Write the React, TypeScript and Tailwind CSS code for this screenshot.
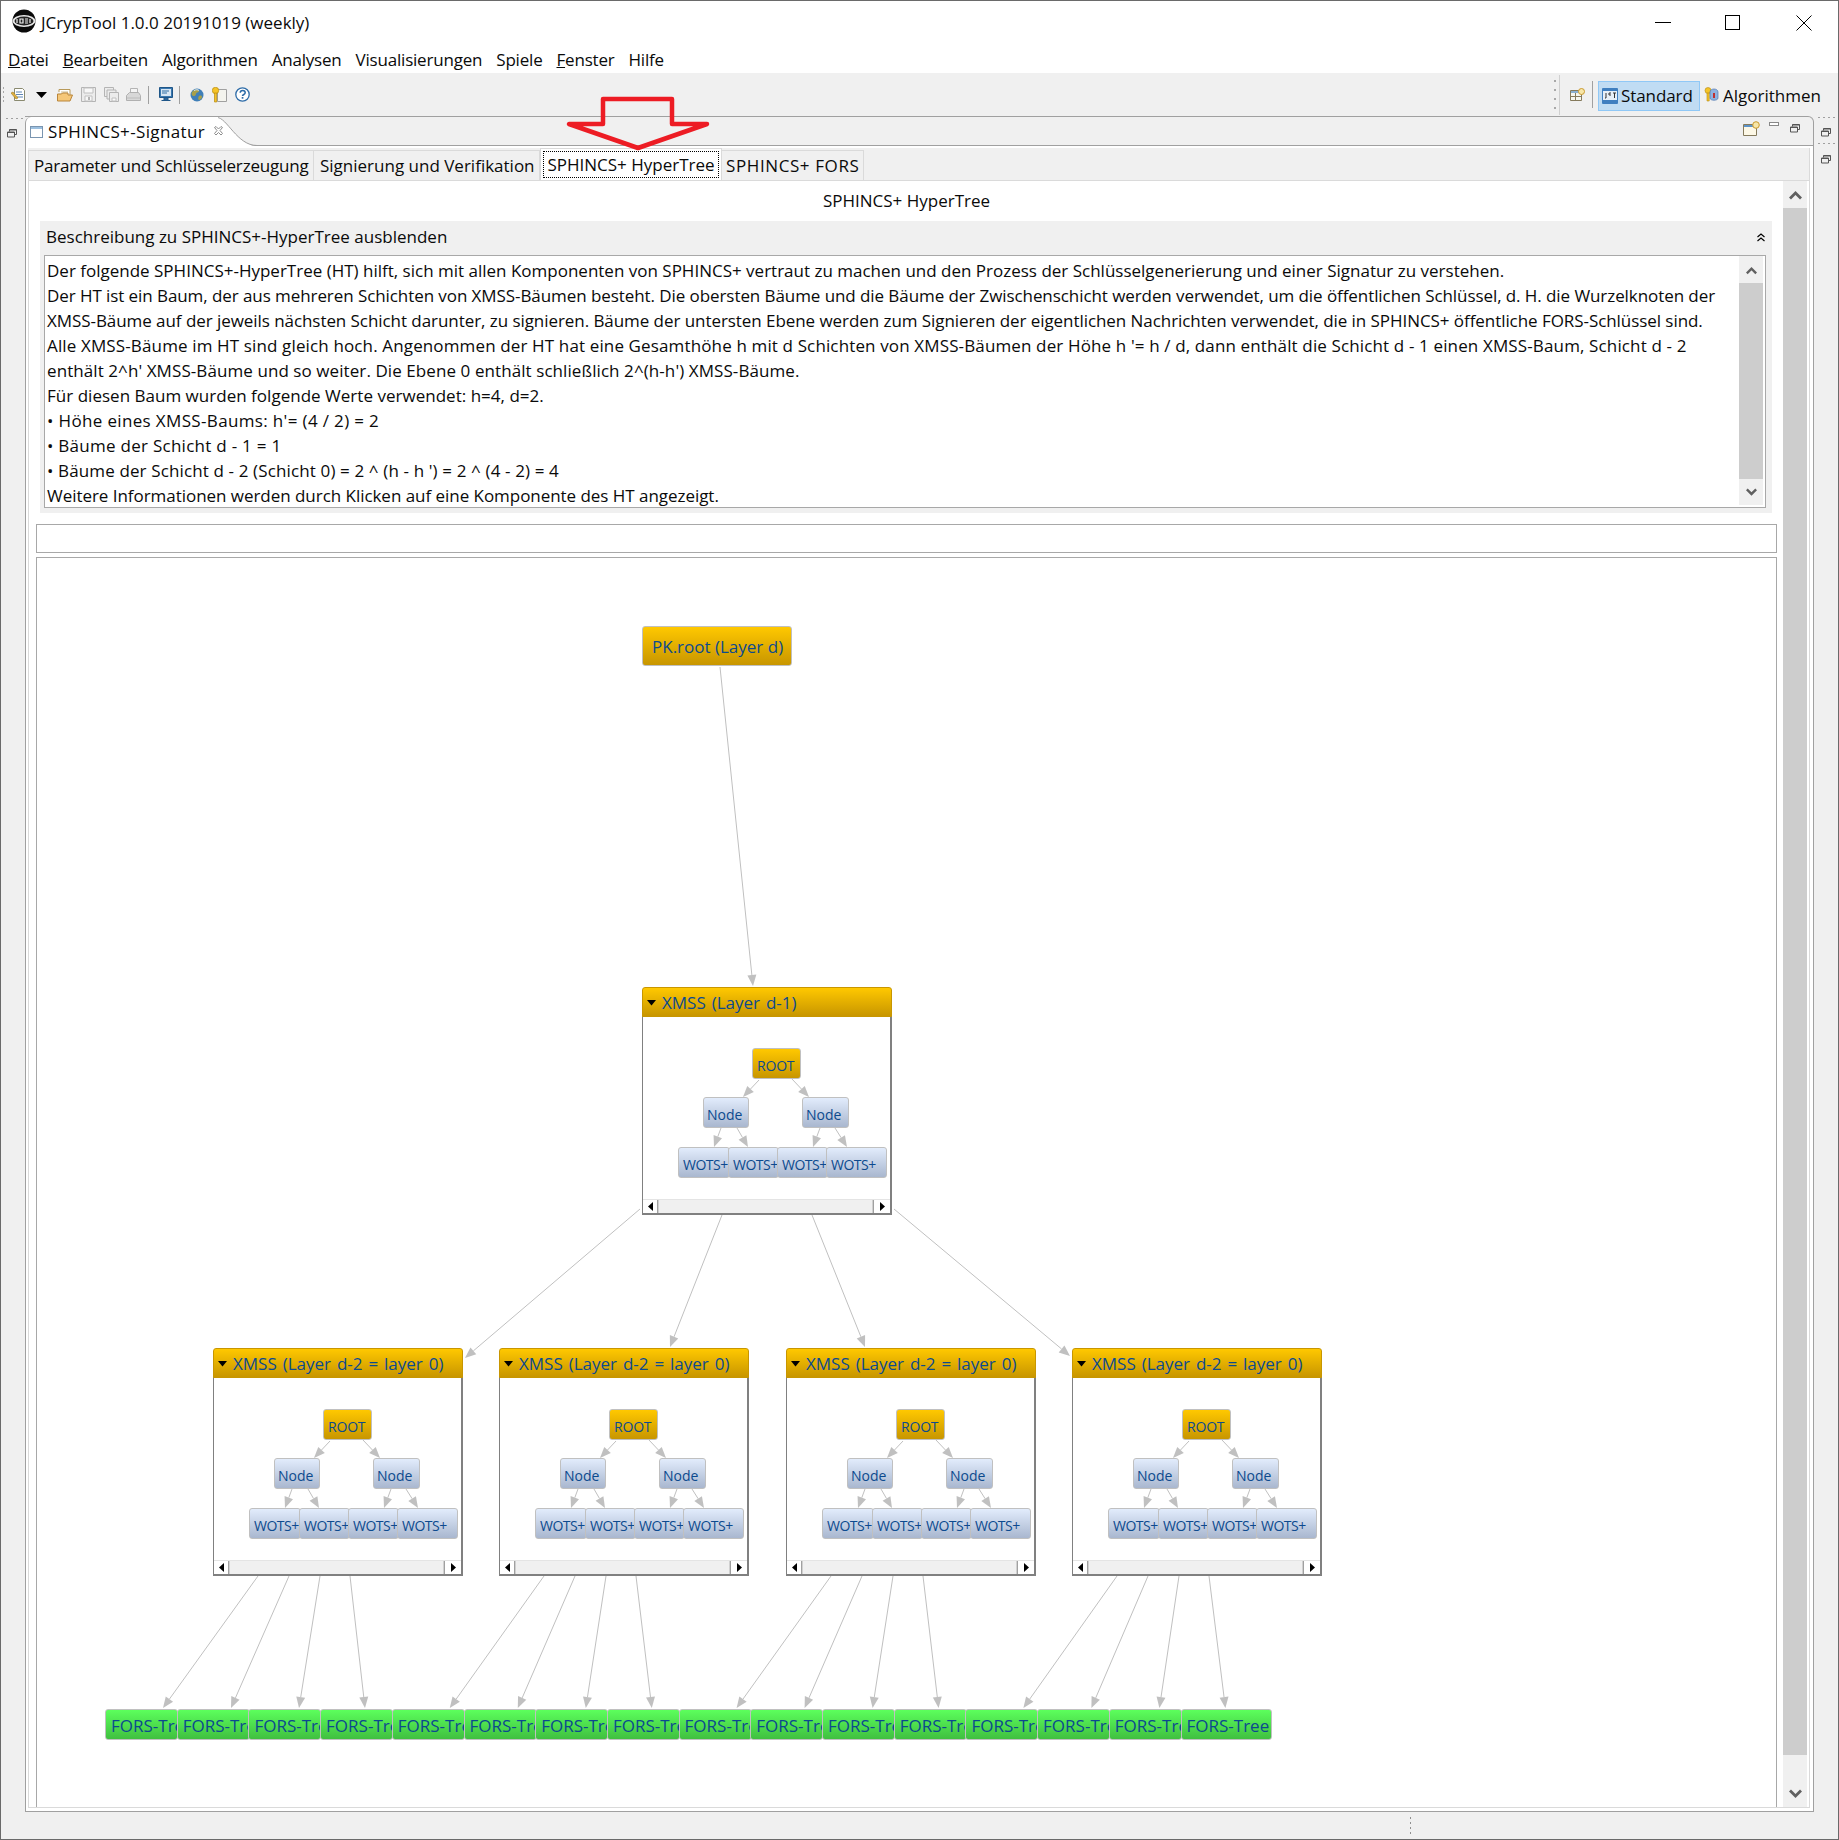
import React from "react";

const CX = 37;
const CY = 558;

type Pt = [number, number, number, number];

function Arrow({ l }: { l: Pt }) {
  const [x1, y1, x2, y2] = l;
  const a = Math.atan2(y2 - y1, x2 - x1);
  const s = 11;
  const w = 4.5;
  const bx = x2 - Math.cos(a) * s;
  const by = y2 - Math.sin(a) * s;
  const p = `${x2},${y2} ${bx - Math.sin(a) * w},${by + Math.cos(a) * w} ${bx + Math.sin(a) * w},${by - Math.cos(a) * w}`;
  return (
    <g>
      <line x1={x1} y1={y1} x2={bx} y2={by} stroke="#c0c0c0" strokeWidth="1" />
      <polygon points={p} fill="#c0c0c0" />
    </g>
  );
}

const yellow = "border border-[#c0c0c0] bg-gradient-to-b from-[#ffc800] to-[#c89600]";
const blue = "border border-[#c0c0c0] bg-gradient-to-b from-[#e2ecfc] to-[#a9b7cf]";
const green = "border border-[#c0c0c0] bg-gradient-to-b from-[#5cff5c] to-[#40c040]";

function GNode({ x, y, w, h, kind, text, pad, size, track = 0 }: { x: number; y: number; w: number; h: number; kind: string; text: string; pad: number; size: number; track?: number }) {
  return (
    <div
      className={`absolute overflow-hidden whitespace-nowrap rounded-[3px] text-[#0c4a8e] ${kind}`}
      style={{ left: x, top: y, width: w, height: h, paddingLeft: pad, paddingTop: size < 15 ? 1 : 0, lineHeight: `${h}px`, fontSize: size, letterSpacing: track }}
    >
      {text}
    </div>
  );
}

const innerEdges: Pt[] = [
  [117, 93, 101, 110],
  [150, 92, 167, 110],
  [79, 141, 72, 160],
  [95, 141, 106, 160],
  [178, 141, 171, 160],
  [193, 141, 205, 160],
];

function Xmss({ x, y, title }: { x: number; y: number; title: string }) {
  return (
    <div className="absolute h-[228px] w-[250px]" style={{ left: x, top: y }}>
      <div className="absolute inset-x-0 bottom-0 top-[28px] border border-b-2 border-r-2 border-[#808080] bg-white" />
      <div className={`absolute inset-x-0 top-0 flex h-[30px] items-center rounded-t-[3px] border-[#c89600] ${yellow} pt-[1px] text-[17px] text-[#0c4a8e] [word-spacing:1.5px]`}>
        <svg width="9" height="6" className="ml-[4px] mr-[6px]" viewBox="0 0 9 6"><path d="M0 0h9L4.5 5.5z" fill="#000" /></svg>
        <span className="whitespace-nowrap">{title}</span>
      </div>
      <svg className="absolute inset-0" width="250" height="228">
        {innerEdges.map((l, i) => <Arrow key={i} l={l} />)}
      </svg>
      <GNode x={110} y={61} w={49} h={31} kind={yellow} text="ROOT" pad={4} size={14} track={-0.2} />
      <GNode x={61} y={110} w={46} h={31} kind={blue} text="Node" pad={3} size={14} />
      <GNode x={160} y={110} w={47} h={31} kind={blue} text="Node" pad={3} size={14} />
      <GNode x={36} y={160} w={52} h={31} kind={blue} text="WOTS+" pad={4} size={14} track={-0.5} />
      <GNode x={86} y={160} w={51} h={31} kind={blue} text="WOTS+" pad={4} size={14} track={-0.5} />
      <GNode x={135} y={160} w={51} h={31} kind={blue} text="WOTS+" pad={4} size={14} track={-0.5} />
      <GNode x={184} y={160} w={61} h={31} kind={blue} text="WOTS+" pad={4} size={14} track={-0.5} />
      <div className="absolute bottom-[2px] left-[1px] right-[2px] flex h-[14px] border-t border-[#e4e4e4] bg-white">
        <div className="flex w-[15px] items-center justify-center border-r border-[#a0a0a0]">
          <svg width="5" height="9" viewBox="0 0 5 9"><path d="M5 0v9L0 4.5z" fill="#000" /></svg>
        </div>
        <div className="flex-1 border-x border-[#d0d0d0] bg-[#f0f0f0]" />
        <div className="flex w-[17px] items-center justify-center border-l border-[#a0a0a0]">
          <svg width="5" height="9" viewBox="0 0 5 9"><path d="M0 0v9L5 4.5z" fill="#000" /></svg>
        </div>
      </div>
    </div>
  );
}

const frames = [213, 499, 786, 1072];
const forsX = Array.from({ length: 16 }, (_, i) => 105 + i * 71.7);

function Graph() {
  const edges: Pt[] = [
    [720, 667, 753, 986],
    [640, 1209, 465, 1358],
    [722, 1215, 670, 1347],
    [812, 1215, 865, 1347],
    [894, 1209, 1070, 1356],
  ];
  frames.forEach((f, i) => {
    const d = f - 213;
    const t = i * 286.8;
    edges.push([258 + d, 1576, 163 + t, 1708]);
    edges.push([289 + d, 1576, 231 + t, 1708]);
    edges.push([320 + d, 1576, 299 + t, 1708]);
    edges.push([350 + d, 1576, 365 + t, 1708]);
  });
  return (
    <div className="relative min-h-0 flex-1 overflow-hidden border-x border-t border-[#a8a8a8] bg-white">
      <svg className="absolute inset-0" width="1740" height="1250">
        {edges.map((e, i) => (
          <Arrow key={i} l={[e[0] - CX, e[1] - CY, e[2] - CX, e[3] - CY]} />
        ))}
      </svg>
      <GNode x={642 - CX} y={626 - CY} w={150} h={40} kind={yellow} text="PK.root (Layer d)" pad={9} size={17} />
      <Xmss x={642 - CX} y={987 - CY} title="XMSS (Layer d-1)" />
      {frames.map((f) => (
        <Xmss key={f} x={f - CX} y={1348 - CY} title="XMSS (Layer d-2 = layer 0)" />
      ))}
      {forsX.map((x, i) => (
        <GNode
          key={i}
          x={x - CX}
          y={1709 - CY}
          w={i === 15 ? 1272 - x : 73}
          h={31}
          kind={green}
          text="FORS-Tree"
          pad={5}
          size={17}
        />
      ))}
    </div>
  );
}

function Chevron({ up, size = 13, color = "#606060" }: { up?: boolean; size?: number; color?: string }) {
  return (
    <svg width={size} height={size * 0.7} viewBox="0 0 13 9">
      <path d={up ? "M1 7.5 6.5 2 12 7.5" : "M1 1.5 6.5 7 12 1.5"} fill="none" stroke={color} strokeWidth="2.8" />
    </svg>
  );
}

function Restore({ className = "" }: { className?: string }) {
  return (
    <svg width="10" height="9" viewBox="0 0 10 9" className={className}>
      <path d="M2.5 2.5V.5h7v5h-2M.5 3h7v5h-7z" fill="none" stroke="#555" />
      <path d="M.5 3.5h7M2.5 1h7" stroke="#555" />
    </svg>
  );
}

function Dots({ className = "" }: { className?: string }) {
  return (
    <div className={`flex gap-[3px] ${className}`}>
      {[0, 1, 2, 3].map((i) => <div key={i} className="h-px w-[2px] bg-[#a0a0a0]" />)}
    </div>
  );
}

function Logo() {
  return (
    <svg width="24" height="24" viewBox="0 0 24 24">
      <circle cx="12" cy="12" r="11.5" fill="#0a0a0a" />
      <ellipse cx="12" cy="12" rx="11.5" ry="6" fill="#e8e8e8" />
      <ellipse cx="12" cy="12" rx="9.5" ry="4.4" fill="#222" />
      <path d="M5 10v4M8 10h3v4H8zM13 10h3M13 12h3M16 14h-3M18 10v4" stroke="#f0f0f0" strokeWidth="1.2" fill="none" />
    </svg>
  );
}

function TB({ children, w, ml }: { children: React.ReactNode; w: number; ml: number }) {
  return <div className="flex shrink-0 items-center justify-center" style={{ width: w, marginLeft: ml }}>{children}</div>;
}

function NewIcon() {
  return (
    <svg width="15" height="15" viewBox="0 0 15 15">
      <path d="M3.5 1.5h8l2 2v10h-10z" fill="#fff" stroke="#8a8a70" />
      <path d="M5 5h6M5 7.5h7M6 10h6" stroke="#5f86b5" />
      <path d="M0 6l5 6 2-1-5-6z" fill="#e0b040" stroke="#a07a20" strokeWidth=".6" />
    </svg>
  );
}

function FolderIcon() {
  return (
    <svg width="16" height="14" viewBox="0 0 16 14">
      <path d="M2 4V1.5h11V10" fill="#fff" stroke="#b89a5a" />
      <path d="M4 4h7M4 6h7" stroke="#c9b98e" />
      <path d="M.5 13V6h4l1-1H11v2h4.5L13 13z" fill="#f5c779" stroke="#b9853a" />
    </svg>
  );
}

function SaveIcon() {
  return (
    <svg width="15" height="15" viewBox="0 0 15 15">
      <path d="M.5.5h14v14H.5z" fill="#ececec" stroke="#b4b4b4" />
      <path d="M3 1h9v5H3zM4 9h7v5H4z" fill="#f8f8f8" stroke="#c0c0c0" />
      <path d="M7 10h2v3H7z" fill="#b4b4b4" />
    </svg>
  );
}

function SaveAllIcon() {
  return (
    <svg width="15" height="15" viewBox="0 0 15 15">
      <path d="M.5.5h9v9h-9z" fill="#ececec" stroke="#b4b4b4" />
      <path d="M3 3h9v9H3z" fill="#ececec" stroke="#b4b4b4" />
      <path d="M5.500 5.500h9v9h-9z" fill="#ececec" stroke="#b4b4b4" />
      <path d="M8 11h4v3H8z" fill="#fafafa" stroke="#c0c0c0" />
    </svg>
  );
}

function PrintIcon() {
  return (
    <svg width="15" height="15" viewBox="0 0 15 15">
      <path d="M4.500 1.500h7v6h-7z" fill="#f5f5f5" stroke="#b4b4b4" />
      <path d="M.5 8.500l3-3h9l2 3v5H.5z" fill="#d8d8d8" stroke="#b0b0b0" />
      <path d="M1 11h13" stroke="#bcbcbc" />
    </svg>
  );
}

function MonitorIcon() {
  return (
    <svg width="14" height="15" viewBox="0 0 14 15">
      <path d="M.5.5h13v10H.5z" fill="#3a78b0" stroke="#1f5688" />
      <path d="M2 2h10v7H2z" fill="#d7e6f3" />
      <path d="M3 4h7M3 6h5" stroke="#2f6ea5" />
      <path d="M5 11h4v2H5zM2.500 13.500h9" fill="#3a78b0" stroke="#1f5688" />
    </svg>
  );
}

function GlobeIcon() {
  return (
    <svg width="14" height="14" viewBox="0 0 14 14">
      <circle cx="7" cy="7" r="6.5" fill="#3f7fb8" />
      <path d="M3 3c2-2 5-2 6 0 0 2-3 1-3 3S3 9 2 7s0-3 1-4zM9 8c2-1 3 0 3 1s-2 3-3 3-1-3 0-4z" fill="#a8a04a" />
      <path d="M4 2.500c2-1 4-1 5 0" stroke="#dfeaf5" fill="none" />
    </svg>
  );
}

function KeyBookIcon() {
  return (
    <svg width="15" height="16" viewBox="0 0 15 16">
      <path d="M5.500 2.500h9v12h-9z" fill="#f4f4ee" stroke="#a0a0a0" />
      <circle cx="3.500" cy="3.500" r="3.200" fill="#f5c428" stroke="#b78a10" strokeWidth=".7" />
      <path d="M2.500 6h2.200v9H2.500z" fill="#f5c428" stroke="#b78a10" strokeWidth=".7" />
    </svg>
  );
}

function HelpIcon() {
  return (
    <svg width="15" height="15" viewBox="0 0 15 15">
      <circle cx="7.500" cy="7.500" r="6.700" fill="#fff" stroke="#2e6ca8" strokeWidth="1.300" />
      <path d="M5.200 5.800c0-3 5-3 5 0 0 1.700-2.700 1.700-2.700 3.300" fill="none" stroke="#2e6ca8" strokeWidth="1.500" />
      <rect x="6.700" y="10" width="1.700" height="1.700" fill="#2e6ca8" />
    </svg>
  );
}

const lines: [string, number][] = [
  ["Der folgende SPHINCS+-HyperTree (HT) hilft, sich mit allen Komponenten von SPHINCS+ vertraut zu machen und den Prozess der Schlüsselgenerierung und einer Signatur zu verstehen.", 0],
  ["Der HT ist ein Baum, der aus mehreren Schichten von XMSS-Bäumen besteht. Die obersten Bäume und die Bäume der Zwischenschicht werden verwendet, um die öffentlichen Schlüssel, d. H. die Wurzelknoten der", -0.075],
  ["XMSS-Bäume auf der jeweils nächsten Schicht darunter, zu signieren. Bäume der untersten Ebene werden zum Signieren der eigentlichen Nachrichten verwendet, die in SPHINCS+ öffentliche FORS-Schlüssel sind.", -0.06],
  ["Alle XMSS-Bäume im HT sind gleich hoch. Angenommen der HT hat eine Gesamthöhe h mit d Schichten von XMSS-Bäumen der Höhe h '= h / d, dann enthält die Schicht d - 1 einen XMSS-Baum, Schicht d - 2", 0.135],
  ["enthält 2^h' XMSS-Bäume und so weiter. Die Ebene 0 enthält schließlich 2^(h-h') XMSS-Bäume.", 0.08],
  ["Für diesen Baum wurden folgende Werte verwendet: h=4, d=2.", 0.02],
  ["• Höhe eines XMSS-Baums: h'= (4 / 2) = 2", 0.35],
  ["• Bäume der Schicht d - 1 = 1", 0.27],
  ["• Bäume der Schicht d - 2 (Schicht 0) = 2 ^ (h - h ') = 2 ^ (4 - 2) = 4", 0.13],
  ["Weitere Informationen werden durch Klicken auf eine Komponente des HT angezeigt.", -0.04],
];

const menus: [string, string][] = [
  ["D", "atei"],
  ["B", "earbeiten"],
  ["", "Algorithmen"],
  ["", "Analysen"],
  ["", "Visualisierungen"],
  ["", "Spiele"],
  ["F", "enster"],
  ["", "Hilfe"],
];

export default function App() {
  return (
    <div className="relative flex h-[1840px] w-[1839px] flex-col overflow-hidden border border-[#6a6a6a] bg-[#f0f0f0] font-['Open_Sans',sans-serif] text-[17px] text-[#0a0a0a]">
      {/* Title bar */}
      <div className="flex h-[39px] shrink-0 items-center bg-white pl-[11px]">
        <Logo />
        <span className="ml-[5px] mt-[4px]">JCrypTool 1.0.0 20191019 (weekly)</span>
        <div className="ml-auto mt-[4px] flex items-center">
          <svg width="16" height="2" className="mr-[54px]"><rect width="16" height="1" fill="#000" /></svg>
          <svg width="15" height="15" className="mr-[56px]"><rect x=".5" y=".5" width="14" height="14" fill="none" stroke="#000" /></svg>
          <svg width="16" height="16" className="mr-[26px]"><path d="M.5.5l15 15M15.500.5l-15 15" stroke="#000" /></svg>
        </div>
      </div>
      {/* Menu */}
      <div className="flex h-[33px] shrink-0 items-center gap-[14px] bg-white pl-[7px] pt-[6px] tracking-[-0.2px]">
        {menus.map(([u, r]) => (
          <span key={u + r} className="whitespace-nowrap">
            {u && <span className="underline">{u}</span>}
            {r}
          </span>
        ))}
      </div>
      {/* Toolbar */}
      <div className="flex h-[43px] shrink-0 items-center">
        <div className="ml-[2px] flex h-[16px] w-[2px] flex-col justify-between">
          {[0, 1, 2, 3].map((i) => <div key={i} className="h-[2px] w-px bg-[#a8a8a8]" />)}
        </div>
        <TB w={15} ml={6}><NewIcon /></TB>
        <TB w={11} ml={10}><svg width="11" height="6" viewBox="0 0 11 6"><path d="M0 0h11L5.500 6z" fill="#000" /></svg></TB>
        <TB w={16} ml={10}><FolderIcon /></TB>
        <TB w={15} ml={8}><SaveIcon /></TB>
        <TB w={15} ml={8}><SaveAllIcon /></TB>
        <TB w={15} ml={7}><PrintIcon /></TB>
        <div className="ml-[7px] h-[18px] w-px bg-[#a0a0a0]" />
        <TB w={14} ml={10}><MonitorIcon /></TB>
        <div className="ml-[6px] h-[18px] w-px bg-[#a0a0a0]" />
        <TB w={14} ml={10}><GlobeIcon /></TB>
        <TB w={15} ml={8}><KeyBookIcon /></TB>
        <TB w={15} ml={8}><HelpIcon /></TB>

        <div className="ml-auto flex h-[30px] w-[2px] flex-col justify-between">
          {[0, 1, 2, 3].map((i) => <div key={i} className="h-[2px] w-[2px] bg-[#a8a8a8]" />)}
        </div>
        <div className="ml-[3px] mr-[10px] h-[40px] w-px bg-[#d0d0d0]" />
        <svg width="15" height="14" viewBox="0 0 15 14">
          <path d="M.5 2.500h11v10H.5z" fill="#f6f6ee" stroke="#857a5c" />
          <path d="M1 3h10v2H1z" fill="#8ab0d0" />
          <path d="M.5 8.500h11M5.500 5v8" stroke="#857a5c" />
          <circle cx="11.500" cy="3.500" r="3" fill="#f7e6a8" stroke="#c9992e" />
        </svg>
        <div className="ml-[7px] h-[27px] w-px bg-[#a0a0a0]" />
        <div className="ml-[5px] mt-[3px] flex h-[30px] w-[102px] items-center border border-[#90c8f6] bg-[#c0dcf3] pl-[3px] tracking-[-0.1px]">
          <svg width="16" height="16" viewBox="0 0 16 16">
            <rect width="16" height="16" rx="1" fill="#3f7fc0" />
            <rect x="1" y="3" width="14" height="9" fill="#e7f0f8" />
            <path d="M4 5v5H3M7 5h2M7 5v2h2M11 5h3M12.500 5v5" stroke="#333" fill="none" />
          </svg>
          <span className="ml-[3px]">Standard</span>
        </div>
        <svg width="15" height="15" viewBox="0 0 15 15" className="ml-[4px]">
          <circle cx="4" cy="3.500" r="3" fill="#f5c428" stroke="#b78a10" strokeWidth=".6" />
          <path d="M3 6h2.200v8H3z" fill="#f5c428" stroke="#b78a10" strokeWidth=".6" />
          <path d="M6 5c0-4 8-4 8 0v6c0 3-8 3-8 0z" fill="#8fb2e0" stroke="#5078b0" strokeWidth=".7" />
          <path d="M10 6v5" stroke="#c03030" strokeWidth="2" />
        </svg>
        <span className="ml-[4px] mr-[17px] mt-[3px]">Algorithmen</span>
      </div>
      {/* Main */}
      <div className="flex min-h-0 flex-1">
        {/* Left trim */}
        <div className="w-[24px] shrink-0 pl-[5px] pt-[2px]">
          <Dots />
          <Restore className="ml-[1px] mt-[10px]" />
        </div>
        {/* Folder */}
        <div className="flex h-[1696px] min-w-0 flex-1 flex-col">
          <div className="relative flex h-[30px] shrink-0 items-start rounded-tr-[6px] border-r border-t border-b border-[#a0a0a0]">
            <div className="relative z-20 flex h-[30px] w-[193px] shrink-0 items-center whitespace-nowrap rounded-tl-[6px] border-l border-[#a0a0a0] bg-white pl-[4px]">
              <svg width="13" height="12" viewBox="0 0 13 12" className="mr-[5px] shrink-0">
                <rect x=".5" y=".5" width="12" height="11" fill="#fff" stroke="#7a95b0" />
                <rect x="1" y="1" width="11" height="2" fill="#9cc0e0" />
              </svg>
              <span className="tracking-[0.35px]">SPHINCS+-Signatur</span>
              <svg width="11" height="11" viewBox="0 0 11 11" className="absolute left-[187px] top-[9px]">
                <path d="M1.500 1.500 3 .5l2.500 2.500L8 .5l1.500 1-2.500 3 2.500 3-1.500 1.500-2.500-2.500L3 9l-1.500-1.500 2.500-3z" fill="#fff" stroke="#8c8c8c" />
              </svg>
            </div>
            <svg width="40" height="30" viewBox="0 0 40 30" className="relative z-10 -ml-px shrink-0">
              <path d="M0 0C10 0 20 29 40 29V30H0z" fill="#fff" />
              <path d="M0 .5C10 .5 20 28.500 40 28.500" fill="none" stroke="#a0a0a0" />
            </svg>
            <div className="absolute right-[53px] top-[4px]">
              <svg width="17" height="15" viewBox="0 0 17 15">
                <path d="M.5 3.500h13v11H.5z" fill="#fdf8e6" stroke="#857a5c" />
                <path d="M1 4h12v2H1z" fill="#5d93c8" />
                <circle cx="13" cy="4" r="3.300" fill="#f7e6a8" stroke="#c9992e" />
              </svg>
            </div>
            <div className="absolute right-[34px] top-[5px] h-[4px] w-[10px] border border-[#888] bg-white" />
            <Restore className="absolute right-[13px] top-[7px]" />
          </div>
          <div className="flex min-h-0 flex-1 flex-col border-x border-b border-[#a0a0a0] bg-white pb-[3px] pl-[2px] pr-[3px] pt-[2px]">
            {/* Nested tabs */}
            <div className="flex h-[32px] shrink-0 items-end bg-[#f0f0f0]">
              <div className="flex h-[30px] w-[286px] items-center border-x border-t border-[#dadada] pl-[5px] tracking-[-0.18px]">Parameter und Schlüsselerzeugung</div>
              <div className="flex h-[30px] w-[226px] items-center border-r border-t border-[#dadada] pl-[6px]">Signierung und Verifikation</div>
              <div className="flex h-[32px] w-[182px] items-center justify-center border-x border-t border-[#dadada] bg-white p-[2px]">
                <div className="flex h-full w-full items-center justify-center whitespace-nowrap border border-dotted border-black">SPHINCS+ HyperTree</div>
              </div>
              <div className="flex h-[30px] w-[142px] items-center border-r border-t border-[#dadada] pl-[4px] tracking-[0.6px]">SPHINCS+ FORS</div>
              <div className="flex-1 self-stretch border-r border-[#dadada]" />
            </div>
            {/* Tab content */}
            <div className="flex min-h-0 flex-1 border border-[#dadada]">
              <div className="flex min-w-0 flex-1 flex-col pl-[7px] pr-[6px]">
                <div className="flex h-[40px] shrink-0 items-center justify-center pb-[1px]">SPHINCS+ HyperTree</div>
                <div className="ml-[4px] mr-[5px] flex h-[292px] shrink-0 flex-col bg-[#f0f0f0] pb-[5px] pl-[4px] pr-[6px]">
                  <div className="flex h-[34px] shrink-0 items-center pb-[2px] pl-[2px] pr-[1px]">
                    <span>Beschreibung zu SPHINCS+-HyperTree ausblenden</span>
                    <svg width="8" height="9" viewBox="0 0 8 9" className="ml-auto">
                      <path d="M.5 4 4 1l3.500 3M.5 8 4 5l3.500 3" fill="none" stroke="#000" strokeWidth="1.200" />
                    </svg>
                  </div>
                  <div className="flex min-h-0 flex-1 border border-[#a8a8a8] bg-white">
                    <div className="min-w-0 flex-1 overflow-hidden pl-[2px] pt-[2px] leading-[25px]">
                      {lines.map(([l, t], i) => (
                        <div key={i} className="h-[25px] whitespace-pre" style={{ letterSpacing: t }}>{l}</div>
                      ))}
                    </div>
                    <div className="mb-[2px] mr-[2px] flex w-[24px] shrink-0 flex-col bg-[#f0f0f0]">
                      <div className="flex h-[27px] items-center justify-center pt-[3px]"><Chevron up size={11} /></div>
                      <div className="flex-1 bg-[#cdcdcd]" />
                      <div className="flex h-[26px] items-center justify-center"><Chevron size={11} /></div>
                    </div>
                  </div>
                </div>
                <div className="mt-[11px] h-[29px] shrink-0 border border-[#a8a8a8] bg-white" />
                <div className="mt-[4px] flex min-h-0 flex-1 flex-col">
                  <Graph />
                </div>
              </div>
              <div className="mr-[2px] flex w-[24px] shrink-0 flex-col bg-[#f0f0f0]">
                <div className="flex h-[27px] items-center justify-center pt-[3px]"><Chevron up /></div>
                <div className="flex-1 bg-[#cdcdcd]" />
                <div className="flex h-[52px] items-center justify-center pt-[26px]"><Chevron /></div>
              </div>
            </div>
          </div>
        </div>
        {/* Right trim */}
        <div className="w-[24px] shrink-0 pl-[4px] pt-[1px]">
          <Dots />
          <Restore className="ml-[3px] mt-[10px]" />
          <Dots className="mt-[6px]" />
          <Restore className="ml-[3px] mt-[11px]" />
        </div>
      </div>
      {/* Status */}
      <div className="relative h-[27px] shrink-0">
        <div className="absolute left-[1409px] top-[5px] flex h-[17px] flex-col justify-between">
          {[0, 1, 2, 3].map((i) => <div key={i} className="h-[2px] w-px bg-[#909090]" />)}
        </div>
      </div>
      {/* Red annotation arrow */}
      <svg className="pointer-events-none absolute left-[560px] top-[90px]" width="160" height="64" viewBox="0 0 160 64">
        <path d="M42 8H111V33H146L77 57 8 33H42z" fill="none" stroke="#ed1c24" strokeWidth="4.500" strokeLinejoin="round" />
      </svg>
    </div>
  );
}
